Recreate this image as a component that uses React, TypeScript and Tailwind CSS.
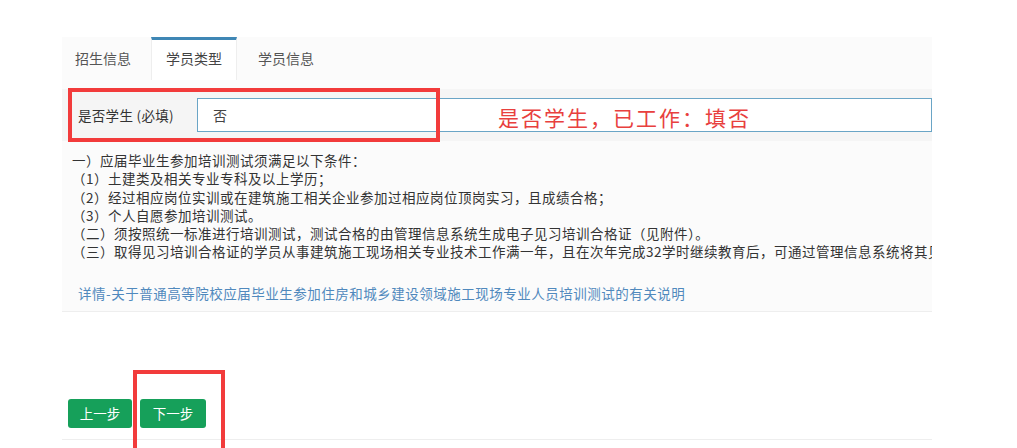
import React from 'react'

const FONT = { fontFamily: '"Noto Sans CJK SC", "Noto Sans", sans-serif' }

const TABS = [
  { label: '招生信息', active: false, width: 'w-[82px]' },
  { label: '学员类型', active: true, width: 'w-[86px]' },
  { label: '学员信息', active: false, width: 'w-[84px]' },
]

const NOTES = [
  '一）应届毕业生参加培训测试须满足以下条件：',
  '（1）土建类及相关专业专科及以上学历；',
  '（2）经过相应岗位实训或在建筑施工相关企业参加过相应岗位顶岗实习，且成绩合格；',
  '（3）个人自愿参加培训测试。',
  '（二）须按照统一标准进行培训测试，测试合格的由管理信息系统生成电子见习培训合格证（见附件）。',
  '（三）取得见习培训合格证的学员从事建筑施工现场相关专业技术工作满一年，且在次年完成32学时继续教育后，可通过管理信息系统将其见习培训合格证转换为职业培训合格证。',
]

export default function App() {
  return (
    <div className="relative w-[1017px] h-[448px] overflow-hidden bg-white text-[#333]" style={FONT}>
      <div className="ml-[62px] w-[870px] pt-[37px]">
        {/* Tabs */}
        <div className="flex h-[43px] bg-[#fbfbfb] gap-[7px]">
          {TABS.map((tab) => (
            <div
              key={tab.label}
              className={`flex items-center justify-center ${tab.width} text-[14px] ${
                tab.active
                  ? 'bg-white border-t-[3px] border-t-[#3f87b5] border-x border-x-[#eeeeee] text-[#444] pb-[3px]'
                  : 'text-[#555]'
              }`}
            >
              {tab.label}
            </div>
          ))}
        </div>

        {/* Panel */}
        <div className="bg-[#fbfbfb] pt-[9px] border-b border-[#eeeeee]">
          <div className="flex items-center h-[52px] bg-[#f5f5f5]">
            <div className="w-[135px] pl-[16px] text-[13.5px] tracking-[0.3px] text-[#333]">是否学生 (必填)</div>
            <div className="flex-1 h-[34px] flex items-center bg-white border border-[#6aa5c6] pl-[15px] text-[14px] text-[#444]">
              否
            </div>
          </div>

          <div className="pt-[10px] pl-[10px] text-[13.5px] leading-[18.3px] tracking-[0.5px] text-[#333]">
            {NOTES.map((line) => (
              <div key={line} className="whitespace-nowrap overflow-hidden">
                {line}
              </div>
            ))}
          </div>

          <div className="mt-[23px] pb-[9px] pl-[16px] text-[13.5px] leading-[18px] tracking-[0.5px] text-[#5089bd] whitespace-nowrap">
            详情-关于普通高等院校应届毕业生参加住房和城乡建设领域施工现场专业人员培训测试的有关说明
          </div>
        </div>

        {/* Buttons */}
        <div className="flex gap-[8px] ml-[6px] mt-[87px]">
          <button className="w-[64px] h-[29px] rounded-[3px] bg-[#16a05a] text-white text-[13.5px]">上一步</button>
          <button className="w-[66px] h-[29px] rounded-[3px] bg-[#16a05a] text-white text-[13.5px]">下一步</button>
        </div>
        <div className="mt-[11px] border-t border-[#eeeeee]" />
      </div>

      {/* Annotations */}
      <div className="absolute left-[68px] top-[88px] w-[372px] h-[54px] border-[4px] border-[#f23b3b]" />
      <div className="absolute left-[498px] top-[103px] text-[21px] leading-[28px] tracking-[2px] text-[#e8403e] whitespace-nowrap">
        是否学生，已工作：填否
      </div>
      <div className="absolute left-[133px] top-[370px] w-[92px] h-[90px] border-[4px] border-[#f23b3b]" />
    </div>
  )
}
